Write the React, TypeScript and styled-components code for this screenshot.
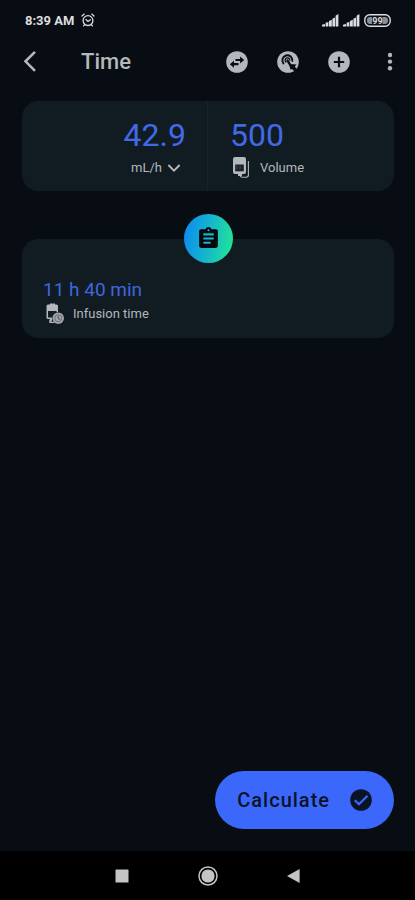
import React from "react";
import styled, { createGlobalStyle } from "styled-components";

const GlobalStyle = createGlobalStyle`
  * { box-sizing: border-box; }
  body { margin: 0; background: #080c13; }
  button, input, select { font: inherit; color: inherit; margin: 0; padding: 0; border: 0; background: none; }
  button { cursor: pointer; }
  svg { display: block; flex: none; }
`;

const Screen = styled.div`
  min-height: 100vh;
  display: flex;
  flex-direction: column;
  background: #080c13;
  color: #b4b7bb;
  font-family: Roboto, "Liberation Sans", sans-serif;
`;

const StatusBar = styled.div`
  display: flex;
  align-items: center;
  justify-content: space-between;
  height: 40px;
  padding: 0 24px 0 25px;
  color: #dcdddf;
  font-size: 13px;
  font-weight: 700;
`;

const StatusGroup = styled.div<{ $gap: number }>`
  display: flex;
  align-items: center;
  gap: ${(p) => p.$gap}px;
`;

const Toolbar = styled.header`
  display: flex;
  align-items: center;
  height: 44px;
  padding: 0 11px 0 16px;
`;

const Title = styled.h1`
  flex: 1;
  margin: 0 0 0 37px;
  font-size: 22px;
  line-height: 28px;
  font-weight: 500;
`;

const IconButton = styled.button`
  display: grid;
  place-items: center;
  width: 28px;
  height: 44px;
`;

const Actions = styled.div`
  display: flex;
  gap: 23px;
`;

const Content = styled.main`
  flex: 1;
  display: flex;
  flex-direction: column;
  gap: 48px;
  padding: 17px 21px 0 22px;
`;

const Card = styled.section`
  background: #111c22;
  border-radius: 16px;
`;

const InputCard = styled(Card)`
  display: grid;
  grid-template-columns: 1fr 1fr;
  height: 90px;
`;

const Field = styled.div<{ $end?: boolean }>`
  display: flex;
  flex-direction: column;
  min-width: 0;
  gap: 2px;
  align-items: ${(p) => (p.$end ? "flex-end" : "flex-start")};
  padding: ${(p) => (p.$end ? "14px 21px 0 16px" : "14px 16px 0 22px")};
  border-right: ${(p) => (p.$end ? "1px solid #17232a" : "0")};
`;

const NumberInput = styled.input<{ $end?: boolean }>`
  width: 100%;
  height: 40px;
  color: #4169e8;
  font-size: 32px;
  line-height: 40px;
  text-align: ${(p) => (p.$end ? "right" : "left")};
  outline: none;
`;

const UnitPicker = styled.label`
  display: flex;
  align-items: center;
  gap: 5px;
  height: 22px;
  padding-right: 5px;
`;

const UnitSelect = styled.select`
  appearance: none;
  font-size: 13px;
  line-height: 20px;
  outline: none;
`;

const Caption = styled.label`
  display: flex;
  align-items: center;
  gap: 8px;
  height: 22px;
  font-size: 13px;
  line-height: 16px;
`;

const ResultCard = styled(Card)`
  display: flex;
  flex-direction: column;
  height: 99px;
  padding: 0 21px;
`;

const Badge = styled.div`
  display: grid;
  place-items: center;
  align-self: center;
  width: 49px;
  height: 49px;
  margin-top: -25px;
  border-radius: 50%;
  background: linear-gradient(100deg, #0c8cf0 5%, #16b6cb 50%, #22e595 95%);
  color: #05080c;
`;

const ResultValue = styled.output`
  margin-top: 14px;
  color: #4065df;
  font-size: 19px;
  line-height: 26px;
`;

const Footer = styled.footer`
  display: flex;
  justify-content: flex-end;
  padding: 20px 21px 22px;
`;

const CalculateButton = styled.button`
  display: flex;
  align-items: center;
  gap: 20px;
  height: 58px;
  padding: 0 22px;
  border-radius: 29px;
  background: #3b68fa;
  color: #0b1329;
  font-size: 20px;
  line-height: 24px;
  font-weight: 500;
  letter-spacing: 1px;
`;

const NavBar = styled.nav`
  display: flex;
  justify-content: center;
  align-items: center;
  gap: 58px;
  height: 49px;
  background: #000;
  color: #c4c4c4;
`;

const AlarmIcon = () => (
  <svg width="14" height="14" viewBox="0 0 14 14" fill="none" stroke="currentColor" strokeWidth="1.3" strokeLinecap="round">
    <circle cx="7" cy="7.6" r="4.9" />
    <path d="M1 3 3.2 1.1M13 3 10.8 1.1M4.9 6.6 7 8.5 9.3 6.8M3.4 11.8 2.6 12.9M10.6 11.8l.8 1.1" />
  </svg>
);

const SignalIcon = () => (
  <svg width="17" height="13" viewBox="0 0 17 13" fill="currentColor">
    <path d="M0 10.8 3 9.9V12.5H0zM3.6 8.8 6.4 7.9v4.6H3.6zM7 7l2.8-1.2v6.7H7zM10.4 4.8 13 3.5v9h-2.6zM13.6 1.8 16.4 0v12.5h-2.8z" />
  </svg>
);

const BatteryIcon = () => (
  <svg width="27" height="13" viewBox="0 0 27 13">
    <rect x="0.8" y="0.8" width="25.4" height="11.4" rx="5" fill="none" stroke="currentColor" strokeWidth="1.4" />
    <rect x="3" y="3" width="21" height="7" rx="3" fill="#8b8d90" />
    <rect x="8" y="2.5" width="10.5" height="8" fill="#15191f" />
    <text x="13.4" y="9.8" fontSize="9" fontWeight="700" textAnchor="middle" fill="currentColor">99</text>
  </svg>
);

const BackIcon = () => (
  <svg width="28" height="28" viewBox="0 0 28 28" fill="none" stroke="currentColor" strokeWidth="2.6">
    <path d="M19 3.8 9.5 13.3 19 22.8" />
  </svg>
);

const SwapIcon = () => (
  <svg width="22" height="22" viewBox="0 0 22 22">
    <circle cx="11" cy="11" r="10.8" fill="currentColor" />
    <path d="M9.5 8h4.6V5.4L18.2 9l-4.1 3.4V10H9.5zM12.5 12.1H8V9.7L3.8 13.3 8 16.8v-2.5h4.5z" fill="#080c13" />
  </svg>
);

const TouchIcon = () => (
  <svg width="22" height="22" viewBox="0 0 22 22">
    <circle cx="11" cy="11" r="10.8" fill="currentColor" />
    <g fill="none" stroke="#080c13" strokeLinecap="round">
      <path d="M6.4 12.4A5 5 0 1 1 15.3 9.9" strokeWidth="1.9" />
      <path d="M8.9 11a2.4 2.4 0 1 1 4-2" strokeWidth="1.3" />
      <path d="M10.6 9.6 14.4 16" strokeWidth="2.4" />
    </g>
    <path d="M12.2 13 19.6 13.4 17.8 15.6 19.8 18.2 17.4 20.4 15.4 18.2 13.4 18.6z" fill="#080c13" />
  </svg>
);

const PlusIcon = () => (
  <svg width="22" height="22" viewBox="0 0 22 22">
    <circle cx="11" cy="11" r="10.8" fill="currentColor" />
    <path d="M11 5.8v10.4M5.8 11h10.4" stroke="#080c13" strokeWidth="2.2" />
  </svg>
);

const MoreIcon = () => (
  <svg width="6" height="20" viewBox="0 0 6 20" fill="currentColor">
    <circle cx="3" cy="3" r="2.2" />
    <circle cx="3" cy="9.6" r="2.2" />
    <circle cx="3" cy="16.2" r="2.2" />
  </svg>
);

const ChevronIcon = () => (
  <svg width="14" height="10" viewBox="0 0 14 10" fill="none" stroke="currentColor" strokeWidth="1.9">
    <path d="M1.4 2 7 7.6 12.6 2" />
  </svg>
);

const VolumeIcon = () => (
  <svg width="22" height="22" viewBox="0 0 22 22">
    <path d="M5 0h9a2 2 0 0 1 2 2v13a2 2 0 0 1-2 2h-2v2H8v-2H5a2 2 0 0 1-2-2V2a2 2 0 0 1 2-2z" fill="currentColor" />
    <path d="M5.2 7.5h8.6v6.8H5.2z" fill="#172027" />
    <path d="M7 8.5v4M10 8.5v4" stroke="#4a5157" strokeWidth="1" />
    <path d="M18.4 4v14a2.2 2.2 0 0 1-2.2 2.2h-4A2.2 2.2 0 0 1 10 18" fill="none" stroke="currentColor" strokeWidth="1.1" />
  </svg>
);

const InfusionIcon = () => (
  <svg width="22" height="22" viewBox="0 0 22 22">
    <path d="M5 1.5h2V.4h5v1.1h1.5A1.5 1.5 0 0 1 15 3v13H9.5l-1.5 3.6L6.5 16H5a1.5 1.5 0 0 1-1.5-1.5V3A1.5 1.5 0 0 1 5 1.5z" fill="currentColor" />
    <path d="M5 8h8.5v2L10 14.5H5z" fill="#151f25" />
    <circle cx="15.2" cy="15.2" r="6.3" fill="#111c22" />
    <circle cx="15.2" cy="15.2" r="5.8" fill="#a0a5a8" />
    <circle cx="15.2" cy="15.2" r="3.5" fill="none" stroke="#6b7378" strokeWidth="1" />
    <path d="M15.2 12.8v2.7l2 1" fill="none" stroke="#4b5459" strokeWidth="1" />
    <path d="M7 17v2.4h4" fill="none" stroke="currentColor" strokeWidth="1.4" />
  </svg>
);

const ClipboardIcon = () => (
  <svg width="25" height="25" viewBox="0 0 24 24" fill="currentColor">
    <path fillRule="evenodd" d="M19 3h-4.18C14.4 1.84 13.3 1 12 1s-2.4.84-2.82 2H5a2 2 0 0 0-2 2v14a2 2 0 0 0 2 2h14a2 2 0 0 0 2-2V5a2 2 0 0 0-2-2zm-7 0a1 1 0 1 1 0 2 1 1 0 0 1 0-2zm2 14H7v-2h7v2zm3-4H7v-2h10v2zm0-4H7V7h10v2z" />
  </svg>
);

const CheckIcon = () => (
  <svg width="22" height="22" viewBox="0 0 22 22">
    <circle cx="11" cy="11" r="10.8" fill="#0b1329" />
    <path d="M4.8 11.2 9 15.3 17.5 6.8" fill="none" stroke="#3b68fa" strokeWidth="2.2" />
  </svg>
);

const RecentsIcon = () => (
  <svg width="14" height="14" viewBox="0 0 14 14" fill="currentColor">
    <rect x="0.5" y="0.5" width="13" height="13" rx="0.6" />
  </svg>
);

const HomeIcon = () => (
  <svg width="20" height="20" viewBox="0 0 20 20">
    <circle cx="10" cy="10" r="9" fill="none" stroke="currentColor" strokeWidth="1.5" />
    <circle cx="10" cy="10" r="6.6" fill="currentColor" />
  </svg>
);

const NavBackIcon = () => (
  <svg width="14" height="16" viewBox="0 0 14 16" fill="currentColor">
    <path d="M12.6 1v14L0 8z" />
  </svg>
);

export default function App() {
  return (
    <>
      <GlobalStyle />
      <Screen>
        <StatusBar>
          <StatusGroup $gap={7}>
            <span>8:39 AM</span>
            <AlarmIcon />
          </StatusGroup>
          <StatusGroup $gap={4}>
            <SignalIcon />
            <SignalIcon />
            <BatteryIcon />
          </StatusGroup>
        </StatusBar>
        <Toolbar>
          <IconButton aria-label="Back"><BackIcon /></IconButton>
          <Title>Time</Title>
          <Actions>
            <IconButton aria-label="Convert"><SwapIcon /></IconButton>
            <IconButton aria-label="Tap counter"><TouchIcon /></IconButton>
            <IconButton aria-label="Add"><PlusIcon /></IconButton>
            <IconButton aria-label="More options"><MoreIcon /></IconButton>
          </Actions>
        </Toolbar>
        <Content>
          <InputCard>
            <Field $end>
              <NumberInput $end aria-label="Rate" inputMode="decimal" defaultValue="42.9" />
              <UnitPicker>
                <UnitSelect aria-label="Rate unit" defaultValue="mL/h">
                  <option>mL/h</option>
                </UnitSelect>
                <ChevronIcon />
              </UnitPicker>
            </Field>
            <Field>
              <NumberInput id="volume" inputMode="decimal" defaultValue="500" />
              <Caption htmlFor="volume">
                <VolumeIcon />
                Volume
              </Caption>
            </Field>
          </InputCard>
          <ResultCard>
            <Badge><ClipboardIcon /></Badge>
            <ResultValue id="infusion">11 h 40 min</ResultValue>
            <Caption htmlFor="infusion">
              <InfusionIcon />
              Infusion time
            </Caption>
          </ResultCard>
        </Content>
        <Footer>
          <CalculateButton>
            Calculate
            <CheckIcon />
          </CalculateButton>
        </Footer>
        <NavBar>
          <IconButton aria-label="Recent apps"><RecentsIcon /></IconButton>
          <IconButton aria-label="Home"><HomeIcon /></IconButton>
          <IconButton aria-label="Go back"><NavBackIcon /></IconButton>
        </NavBar>
      </Screen>
    </>
  );
}
